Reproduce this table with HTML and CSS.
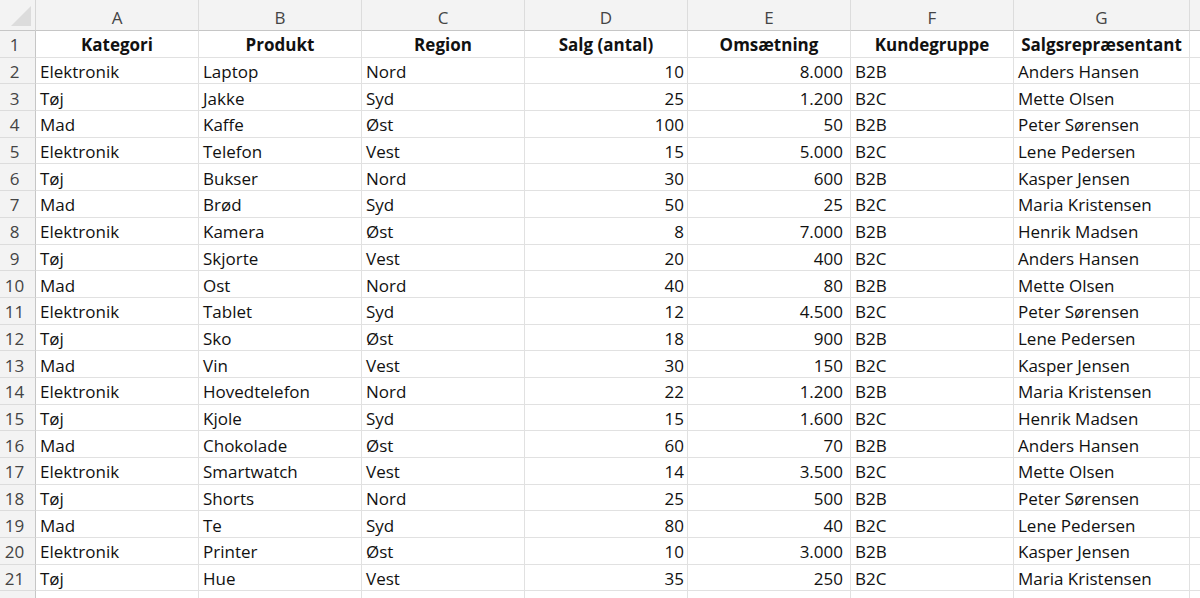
FILE: index.html
```html
<!DOCTYPE html>
<html lang="da">
<head>
<meta charset="utf-8">
<title>Salg</title>
<link rel="stylesheet" href="styles.css">
</head>
<body>
<div class="sheet">
  <div class="corner"><span class="tri"></span></div>
  <div class="colhead">A</div><div class="colhead">B</div><div class="colhead">C</div><div class="colhead">D</div><div class="colhead">E</div><div class="colhead">F</div><div class="colhead">G</div><div class="colhead last"></div>

  <div class="rowhead">1</div><div class="c h">Kategori</div><div class="c h">Produkt</div><div class="c h">Region</div><div class="c h">Salg (antal)</div><div class="c h">Omsætning</div><div class="c h">Kundegruppe</div><div class="c h">Salgsrepræsentant</div><div class="c"></div>
  <div class="rowhead">2</div><div class="c">Elektronik</div><div class="c">Laptop</div><div class="c">Nord</div><div class="c n">10</div><div class="c n e">8.000</div><div class="c">B2B</div><div class="c">Anders Hansen</div><div class="c"></div>
  <div class="rowhead">3</div><div class="c">Tøj</div><div class="c">Jakke</div><div class="c">Syd</div><div class="c n">25</div><div class="c n e">1.200</div><div class="c">B2C</div><div class="c">Mette Olsen</div><div class="c"></div>
  <div class="rowhead">4</div><div class="c">Mad</div><div class="c">Kaffe</div><div class="c">Øst</div><div class="c n">100</div><div class="c n e">50</div><div class="c">B2B</div><div class="c">Peter Sørensen</div><div class="c"></div>
  <div class="rowhead">5</div><div class="c">Elektronik</div><div class="c">Telefon</div><div class="c">Vest</div><div class="c n">15</div><div class="c n e">5.000</div><div class="c">B2C</div><div class="c">Lene Pedersen</div><div class="c"></div>
  <div class="rowhead">6</div><div class="c">Tøj</div><div class="c">Bukser</div><div class="c">Nord</div><div class="c n">30</div><div class="c n e">600</div><div class="c">B2B</div><div class="c">Kasper Jensen</div><div class="c"></div>
  <div class="rowhead">7</div><div class="c">Mad</div><div class="c">Brød</div><div class="c">Syd</div><div class="c n">50</div><div class="c n e">25</div><div class="c">B2C</div><div class="c">Maria Kristensen</div><div class="c"></div>
  <div class="rowhead">8</div><div class="c">Elektronik</div><div class="c">Kamera</div><div class="c">Øst</div><div class="c n">8</div><div class="c n e">7.000</div><div class="c">B2B</div><div class="c">Henrik Madsen</div><div class="c"></div>
  <div class="rowhead">9</div><div class="c">Tøj</div><div class="c">Skjorte</div><div class="c">Vest</div><div class="c n">20</div><div class="c n e">400</div><div class="c">B2C</div><div class="c">Anders Hansen</div><div class="c"></div>
  <div class="rowhead">10</div><div class="c">Mad</div><div class="c">Ost</div><div class="c">Nord</div><div class="c n">40</div><div class="c n e">80</div><div class="c">B2B</div><div class="c">Mette Olsen</div><div class="c"></div>
  <div class="rowhead">11</div><div class="c">Elektronik</div><div class="c">Tablet</div><div class="c">Syd</div><div class="c n">12</div><div class="c n e">4.500</div><div class="c">B2C</div><div class="c">Peter Sørensen</div><div class="c"></div>
  <div class="rowhead">12</div><div class="c">Tøj</div><div class="c">Sko</div><div class="c">Øst</div><div class="c n">18</div><div class="c n e">900</div><div class="c">B2B</div><div class="c">Lene Pedersen</div><div class="c"></div>
  <div class="rowhead">13</div><div class="c">Mad</div><div class="c">Vin</div><div class="c">Vest</div><div class="c n">30</div><div class="c n e">150</div><div class="c">B2C</div><div class="c">Kasper Jensen</div><div class="c"></div>
  <div class="rowhead">14</div><div class="c">Elektronik</div><div class="c">Hovedtelefon</div><div class="c">Nord</div><div class="c n">22</div><div class="c n e">1.200</div><div class="c">B2B</div><div class="c">Maria Kristensen</div><div class="c"></div>
  <div class="rowhead">15</div><div class="c">Tøj</div><div class="c">Kjole</div><div class="c">Syd</div><div class="c n">15</div><div class="c n e">1.600</div><div class="c">B2C</div><div class="c">Henrik Madsen</div><div class="c"></div>
  <div class="rowhead">16</div><div class="c">Mad</div><div class="c">Chokolade</div><div class="c">Øst</div><div class="c n">60</div><div class="c n e">70</div><div class="c">B2B</div><div class="c">Anders Hansen</div><div class="c"></div>
  <div class="rowhead">17</div><div class="c">Elektronik</div><div class="c">Smartwatch</div><div class="c">Vest</div><div class="c n">14</div><div class="c n e">3.500</div><div class="c">B2C</div><div class="c">Mette Olsen</div><div class="c"></div>
  <div class="rowhead">18</div><div class="c">Tøj</div><div class="c">Shorts</div><div class="c">Nord</div><div class="c n">25</div><div class="c n e">500</div><div class="c">B2B</div><div class="c">Peter Sørensen</div><div class="c"></div>
  <div class="rowhead">19</div><div class="c">Mad</div><div class="c">Te</div><div class="c">Syd</div><div class="c n">80</div><div class="c n e">40</div><div class="c">B2C</div><div class="c">Lene Pedersen</div><div class="c"></div>
  <div class="rowhead">20</div><div class="c">Elektronik</div><div class="c">Printer</div><div class="c">Øst</div><div class="c n">10</div><div class="c n e">3.000</div><div class="c">B2B</div><div class="c">Kasper Jensen</div><div class="c"></div>
  <div class="rowhead">21</div><div class="c">Tøj</div><div class="c">Hue</div><div class="c">Vest</div><div class="c n">35</div><div class="c n e">250</div><div class="c">B2C</div><div class="c">Maria Kristensen</div><div class="c"></div>
  <div class="rowhead"></div><div class="c"></div><div class="c"></div><div class="c"></div><div class="c"></div><div class="c"></div><div class="c"></div><div class="c"></div><div class="c"></div>
</div>
</body>
</html>
```

FILE: styles.css
```css
html, body {
  margin: 0;
  padding: 0;
  background: #ffffff;
  overflow: hidden;
}
.sheet {
  display: grid;
  grid-template-columns: 36px 163px 163px 163px 163px 163px 163px 176px 30px;
  grid-template-rows: 31px repeat(21, 26.7px) 30px;
  font-family: "Open Sans", "Noto Sans", sans-serif;
  font-size: 17px;
  color: #111111;
  width: 1200px;
  height: 598px;
  overflow: hidden;
}
.corner {
  background: #f3f3f3;
  border-right: 1px solid #d6d6d6;
  border-bottom: 1px solid #c6c6c6;
  position: relative;
}
.tri {
  position: absolute;
  right: 4px;
  bottom: 4px;
  width: 0;
  height: 0;
  border-left: 20px solid transparent;
  border-bottom: 20px solid #dcdcdc;
}
.colhead {
  background: #f3f3f3;
  border-right: 1px solid #dcdcdc;
  border-bottom: 1px solid #c6c6c6;
  color: #444444;
  display: flex;
  align-items: center;
  justify-content: center;
  padding-top: 5px;
}
.rowhead {
  background: #f3f3f3;
  border-right: 1px solid #c6c6c6;
  border-bottom: 1px solid #dcdcdc;
  color: #444444;
  display: flex;
  align-items: center;
  justify-content: center;
  padding-right: 6px;
  padding-top: 2px;
}
.c {
  border-right: 1px solid #e1e1e1;
  border-bottom: 1px solid #e1e1e1;
  display: flex;
  align-items: center;
  padding-left: 4px;
  padding-top: 2px;
  white-space: nowrap;
  overflow: hidden;
  box-sizing: border-box;
}
.h {
  font-weight: 700;
  justify-content: center;
  padding-left: 0;
}
.n {
  justify-content: flex-end;
  padding-right: 3px;
}
.n.e {
  padding-right: 7px;
}
```
